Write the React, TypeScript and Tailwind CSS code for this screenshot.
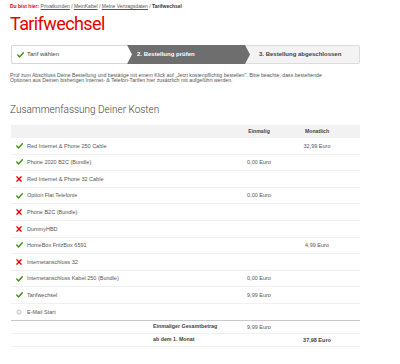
import React from "react"

type Row = { s: "ok" | "no" | "off"; name: string; once?: string; monthly?: string }

const rows: Row[] = [
  { s: "ok", name: "Red Internet & Phone 250 Cable", monthly: "32,99 Euro" },
  { s: "ok", name: "Phone 2020 B2C (Bundle)", once: "0,00 Euro" },
  { s: "no", name: "Red Internet & Phone 32 Cable" },
  { s: "ok", name: "Option Flat Telefonie", once: "0,00 Euro" },
  { s: "no", name: "Phone B2C (Bundle)" },
  { s: "no", name: "DummyHBD" },
  { s: "ok", name: "HomeBox FritzBox 6591", monthly: "4,99 Euro" },
  { s: "no", name: "Internetanschluss 32" },
  { s: "ok", name: "Internetanschluss Kabel 250 (Bundle)", once: "0,00 Euro" },
  { s: "ok", name: "Tarifwechsel", once: "9,99 Euro" },
  { s: "off", name: "E-Mail Start" },
]

function Check() {
  return (
    <svg width="7" height="6" viewBox="0 0 8 7">
      <path d="M0.8 3.6 L2.9 5.8 L7.3 0.9" fill="none" stroke="#3f8e14" strokeWidth="1.6" strokeLinecap="round" strokeLinejoin="round" />
    </svg>
  )
}

function Cross() {
  return (
    <svg width="6" height="6" viewBox="0 0 7 7">
      <path d="M1 1 L6 6 M6 1 L1 6" fill="none" stroke="#e60000" strokeWidth="1.6" strokeLinecap="round" />
    </svg>
  )
}

function Off() {
  return (
    <svg width="6" height="6" viewBox="0 0 7 7">
      <circle cx="3.5" cy="3.5" r="3" fill="#d4d4d4" />
      <circle cx="3.5" cy="3.5" r="1.5" fill="#ececec" />
    </svg>
  )
}

export default function App() {
  return (
    <div className="w-[400px] h-[364px] bg-white text-[#333] font-['Liberation_Sans',Arial,sans-serif] overflow-hidden">
      <div className="ml-[10px] w-[350px]">
        {/* breadcrumb */}
        <div className="pt-[3px] h-[11px] text-[5px] leading-[6px] text-[#555]">
          <span className="font-bold text-[#e60000]">Du bist hier:</span>{" "}
          <span className="underline">Privatkunden</span> / <span className="underline">MeinKabel</span> /{" "}
          <span className="underline">Meine Vertragsdaten</span> / <span className="font-bold text-[#333]">Tarifwechsel</span>
        </div>

        <h1 className="h-[28px] pt-[2px] text-[18px] leading-[22px] tracking-[-0.6px] text-[#e60000] font-['Roboto',sans-serif]">
          Tarifwechsel
        </h1>

        {/* steps */}
        <div className="mt-[6px] ml-[1px] w-[349px] h-[19px] flex text-[6px] font-bold">
          <div className="w-[116px] border border-r-0 border-[#d6d6d6] rounded-l-[2px] flex items-center gap-[3px] pl-[5px] font-normal text-[#444]">
            <Check />
            <span>Tarif wählen</span>
          </div>
          <div className="relative z-10 w-[123px] bg-[#6e6e6e] text-white flex items-center pl-[10px] [clip-path:polygon(0_0,calc(100%-5px)_0,100%_50%,calc(100%-5px)_100%,0_100%,5px_50%)]">
            2. Bestellung prüfen
          </div>
          <div className="-ml-[5px] flex-1 bg-[#f3f3f3] border border-l-0 border-[#dcdcdc] rounded-r-[2px] flex items-center pl-[14px] text-[#444]">
            3. Bestellung abgeschlossen
          </div>
        </div>

        {/* info */}
        <p className="mt-[9px] text-[5.2px] leading-[5px] text-[#555]">
          Prüf zum Abschluss Deine Bestellung und bestätige mit einem Klick auf „Jetzt kostenpflichtig bestellen". Bitte beachte, dass bestehende
          <br />
          Optionen aus Deinen bisherigen Internet- &amp; Telefon-Tarifen hier zusätzlich mit aufgeführt werden.
        </p>

        <h2 className="mt-[21px] text-[10px] leading-[12px] font-light text-[#444] font-['Roboto',sans-serif]">
          Zusammenfassung Deiner Kosten
        </h2>

        {/* table */}
        <div className="mt-[9px] ml-[1px] w-[349px] text-[5.5px] text-[#555]">
          <div className="h-[13px] bg-[#f2f2f2] grid grid-cols-[1fr_58px_58px_14px] items-center font-bold text-[5.2px] text-[#444]">
            <span />
            <span className="text-center">Einmalig</span>
            <span className="text-center">Monatlich</span>
          </div>
          {rows.map((r, i) => (
            <div
              key={r.name}
              className={
                "h-[16.6px] grid grid-cols-[1fr_58px_58px_14px] items-center " +
                (i < rows.length - 1 ? "border-b border-[#f0f0f0]" : "border-b border-[#c9c9c9]")
              }
            >
              <div className="flex items-center gap-[4px] pl-[4px]">
                <span className="w-[8px] flex justify-center">
                  {r.s === "ok" ? <Check /> : r.s === "no" ? <Cross /> : <Off />}
                </span>
                <span>{r.name}</span>
              </div>
              <span className="text-center">{r.once}</span>
              <span className="text-center">{r.monthly}</span>
            </div>
          ))}
          <div className="h-[13.4px] grid grid-cols-[1fr_58px_58px_14px] items-center border-b border-[#f0f0f0]">
            <span className="pl-[142px] font-bold text-[5.3px] text-[#444]">Einmaliger Gesamtbetrag</span>
            <span className="text-center">9,99 Euro</span>
            <span />
          </div>
          <div className="h-[13px] grid grid-cols-[1fr_58px_58px_14px] items-center border-b border-[#f0f0f0]">
            <span className="pl-[142px] font-bold text-[5.3px] text-[#444]">ab dem 1. Monat</span>
            <span />
            <span className="text-center font-bold text-[#444]">37,98 Euro</span>
          </div>
        </div>
      </div>
    </div>
  )
}
